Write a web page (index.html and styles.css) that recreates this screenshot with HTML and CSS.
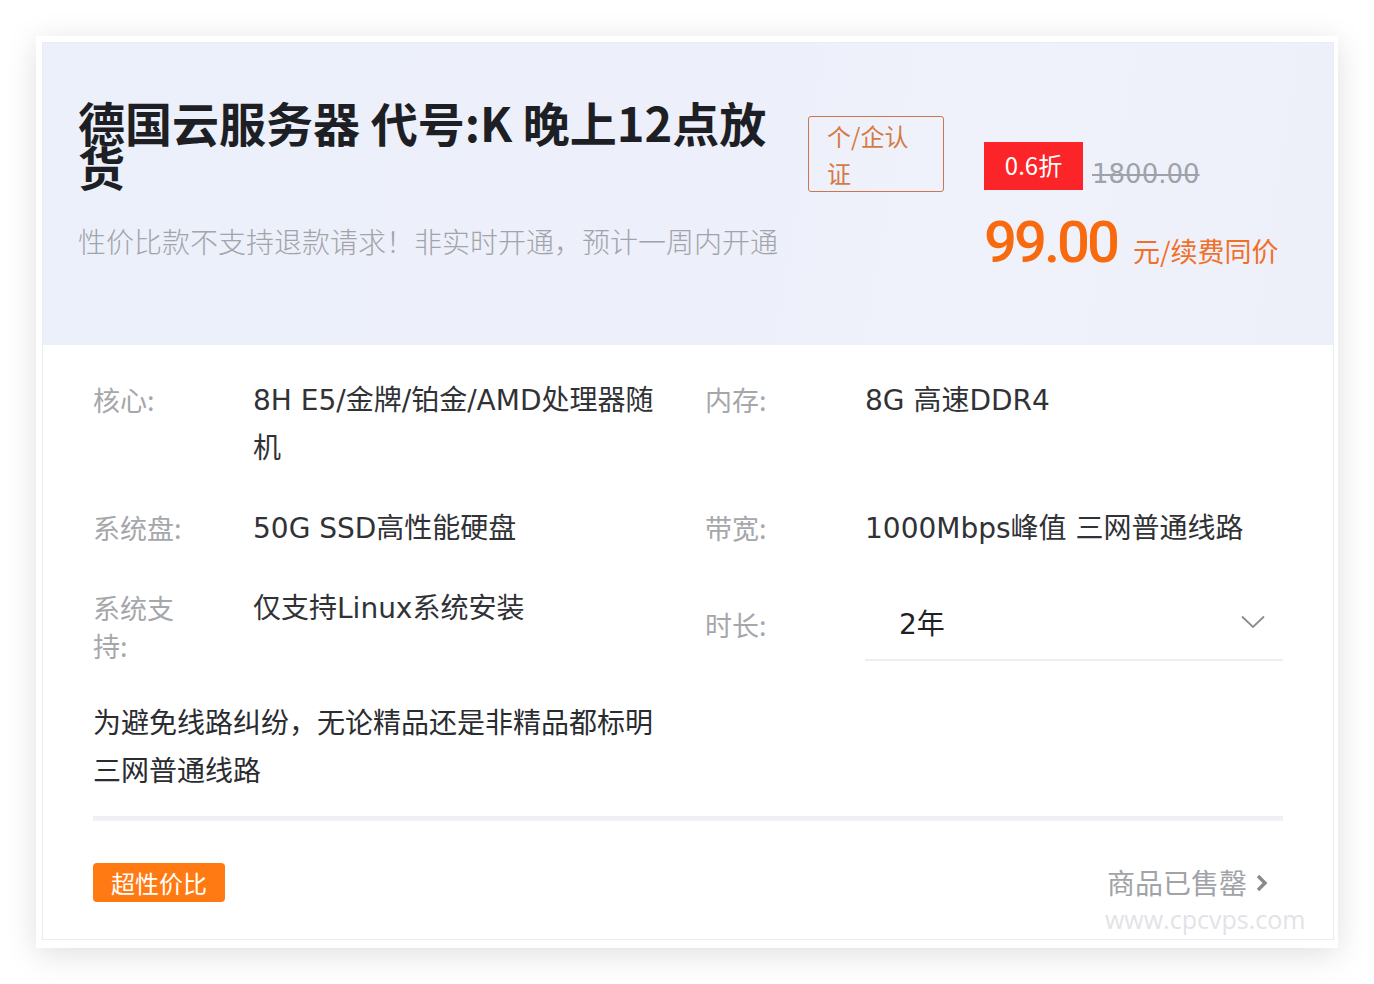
FILE: index.html
```html
<!DOCTYPE html>
<html lang="zh-CN">
<head>
<meta charset="utf-8">
<title>德国云服务器</title>
<link rel="stylesheet" href="styles.css">
</head>
<body>
<div class="frame">
  <div class="card">
    <div class="header">
      <div class="head-left">
        <h1 class="title">德国云服务器 代号:K 晚上12点放货</h1>
        <p class="subtitle">性价比款不支持退款请求！非实时开通，预计一周内开通</p>
      </div>
      <div class="cert">个/企认证</div>
      <div class="price">
        <div class="price-top">
          <span class="discount">0.6折</span>
          <span class="orig">1800.00</span>
        </div>
        <div class="price-main">
          <span class="amount">99.00</span>
          <span class="unit">元/续费同价</span>
        </div>
      </div>
    </div>
    <div class="body">
      <div class="specs">
        <div class="item item-left">
          <div class="label">核心:</div>
          <div class="value">8H E5/金牌/铂金/AMD处理器随机</div>
        </div>
        <div class="item">
          <div class="label">内存:</div>
          <div class="value">8G 高速DDR4</div>
        </div>
        <div class="item item-left">
          <div class="label">系统盘:</div>
          <div class="value">50G SSD高性能硬盘</div>
        </div>
        <div class="item">
          <div class="label">带宽:</div>
          <div class="value">1000Mbps峰值 三网普通线路</div>
        </div>
        <div class="item item-left">
          <div class="label">系统支持:</div>
          <div class="value">仅支持Linux系统安装</div>
        </div>
        <div class="item item-select">
          <div class="label label-mid">时长:</div>
          <div class="select">
            <span class="select-text">2年</span>
            <svg class="select-arrow" width="24" height="14" viewBox="0 0 24 14"><polyline points="1,1.5 12,12 23,1.5" fill="none" stroke="#8c8c8c" stroke-width="1.8"/></svg>
          </div>
        </div>
        <div class="note">为避免线路纠纷，无论精品还是非精品都标明三网普通线路</div>
      </div>
      <div class="divider"></div>
      <div class="footer">
        <span class="tag">超性价比</span>
        <span class="soldout">商品已售罄
          <svg class="soldout-arrow" width="14" height="20" viewBox="0 0 14 20"><polyline points="3,3 10,10 3,17" fill="none" stroke="#8a8a8a" stroke-width="3.4"/></svg>
        </span>
      </div>
      <div class="watermark">www.cpcvps.com</div>
    </div>
  </div>
</div>
</body>
</html>
```
FILE: styles.css
```css
* { box-sizing: border-box; }
html, body { margin: 0; padding: 0; background: #ffffff; }
body {
  font-family: "Noto Sans CJK SC", "Noto Sans", sans-serif;
  width: 1374px;
  height: 984px;
  padding: 36px 36px 0 36px;
}
.frame {
  width: 1302px;
  height: 912px;
  background: #ffffff;
  padding: 6px 4px 8px 6px;
  box-shadow: 0 6px 30px rgba(0, 0, 0, 0.13);
}
.card {
  height: 100%;
  background: #fff;
  border: 1px solid #e8ecf4;
  position: relative;
}
.header {
  height: 302px;
  background: linear-gradient(100deg, #ecf0fa 0%, #edf0fa 55%, #f0f2fb 75%, #eef0f9 100%);
  display: flex;
  align-items: flex-start;
  padding: 57px 0 0 35px;
}
.head-left { width: 730px; flex: none; }
.title {
  margin: 0;
  width: 720px;
  font-size: 47px;
  line-height: 44px;
  font-weight: 700;
  color: #1d1f24;
}
.subtitle {
  margin: 33px 0 0 0;
  font-size: 28px;
  line-height: 40px;
  color: #a2a4a9;
  font-weight: 300;
}
.cert {
  flex: none;
  margin-top: 16px;
  width: 136px;
  height: 76px;
  border: 1.5px solid #c97750;
  border-radius: 3px;
  padding: 0 22px 0 18px;
  font-size: 24px;
  line-height: 37px;
  color: #d57a44;
}
.price {
  flex: none;
  margin-left: 40px;
  margin-top: 42px;
}
.price-top { display: flex; align-items: flex-end; }
.discount {
  width: 99px;
  height: 48px;
  background: #fb2429;
  color: #fff;
  font-size: 24px;
  line-height: 46px;
  text-align: center;
}
.orig {
  margin-left: 9px;
  font-family: "DejaVu Sans", sans-serif;
  font-size: 26px;
  line-height: 32px;
  color: #9ea2aa;
  text-decoration: line-through;
}
.price-main {
  display: flex;
  align-items: baseline;
  margin-top: 21px;
}
.amount {
  font-family: Roboto, "Noto Sans", sans-serif;
  font-size: 58px;
  line-height: 62px;
  font-weight: 500;
  color: #f86a10;
  letter-spacing: -3px;
}
.unit {
  margin-left: 16px;
  font-size: 27px;
  color: #f0702a;
}
.body {
  padding: 32px 50px 0 50px;
}
.specs {
  display: grid;
  grid-template-columns: 612px 1fr;
  row-gap: 32px;
}
.item { display: flex; align-items: flex-start; }
.item-left { padding-right: 40px; }
.label {
  flex: none;
  width: 110px;
  margin-right: 50px;
  font-size: 27px;
  line-height: 38px;
  padding-top: 4px;
  color: #a5a7ab;
}
.label-mid { align-self: center; padding-top: 0; }
.value {
  font-family: "DejaVu Sans", "Noto Sans CJK SC", sans-serif;
  font-size: 28px;
  line-height: 48px;
  color: #303236;
  max-width: 418px;
}
.item-select { align-items: stretch; }
.select {
  flex: 1;
  height: 76px;
  border-bottom: 2px solid #eceef2;
  display: flex;
  align-items: center;
  justify-content: space-between;
  padding: 0 18px 0 34px;
}
.select-text {
  font-family: "DejaVu Sans", "Noto Sans CJK SC", sans-serif;
  font-size: 28px;
  color: #1e2024;
}
.note {
  grid-column: 1;
  max-width: 572px;
  font-size: 28px;
  line-height: 48px;
  color: #2a2c30;
}
.divider {
  margin-top: 23px;
  height: 5px;
  background: linear-gradient(180deg, #eceef2 0%, #f2f3f6 100%);
}
.footer {
  margin-top: 42px;
  display: flex;
  justify-content: space-between;
  align-items: center;
  padding-right: 14px;
}
.tag {
  width: 132px;
  height: 39px;
  padding-left: 18px;
  background: #ff7a12;
  border-radius: 4px;
  color: #fff;
  font-size: 24px;
  line-height: 39px;
}
.soldout {
  display: flex;
  align-items: center;
  gap: 8px;
  font-size: 28px;
  line-height: 39px;
  color: #a1a3a7;
}
.watermark {
  position: absolute;
  left: 1062px;
  top: 859px;
  font-family: "Open Sans", sans-serif;
  font-size: 25px;
  color: #e2e3e6;
}
```
